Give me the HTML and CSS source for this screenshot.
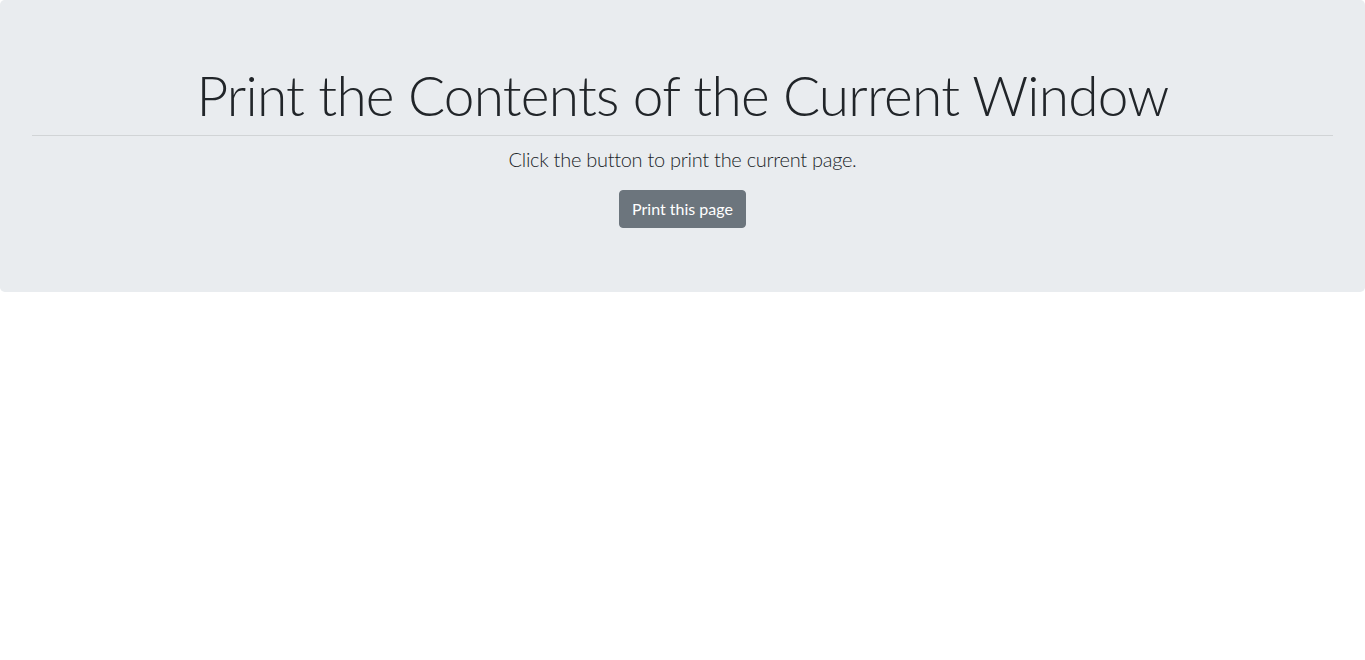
FILE: index.html
```html
<!DOCTYPE html>
<html lang="en">
<head>
<meta charset="utf-8">
<title>Print the Contents of the Current Window</title>
<link rel="stylesheet" href="styles.css">
</head>
<body>
<div class="jumbotron">
  <h1 class="display">Print the Contents of the Current Window</h1>
  <hr class="rule">
  <p class="lead">Click the button to print the current page.</p>
  <button class="btn" type="button">Print this page</button>
</div>
</body>
</html>
```
FILE: styles.css
```css
* { box-sizing: border-box; }
html, body { margin: 0; padding: 0; }
body {
  font-family: Lato, "Open Sans", sans-serif;
  color: #212529;
  background: #fff;
  font-size: 16px;
  line-height: 1.5;
}
.jumbotron {
  background: #e9ecef;
  border-radius: 4.8px;
  padding: 60px 32px 64px;
  text-align: center;
}
.display {
  margin: 0;
  font-size: 55px;
  font-weight: 300;
  line-height: 71px;
  letter-spacing: -0.77px;
}
.rule {
  margin: 4px 0 0;
  border: 0;
  border-top: 1px solid rgba(0,0,0,.1);
}
.lead {
  margin: 8px 0 16px;
  font-size: 20px;
  font-weight: 300;
  line-height: 30px;
  letter-spacing: -0.28px;
}
.btn {
  display: inline-block;
  font-family: inherit;
  font-size: 16px;
  line-height: 24px;
  padding: 6px 12px;
  color: #fff;
  background: #6c757d;
  border: 1px solid #6c757d;
  border-radius: 4px;
  cursor: pointer;
}
```
